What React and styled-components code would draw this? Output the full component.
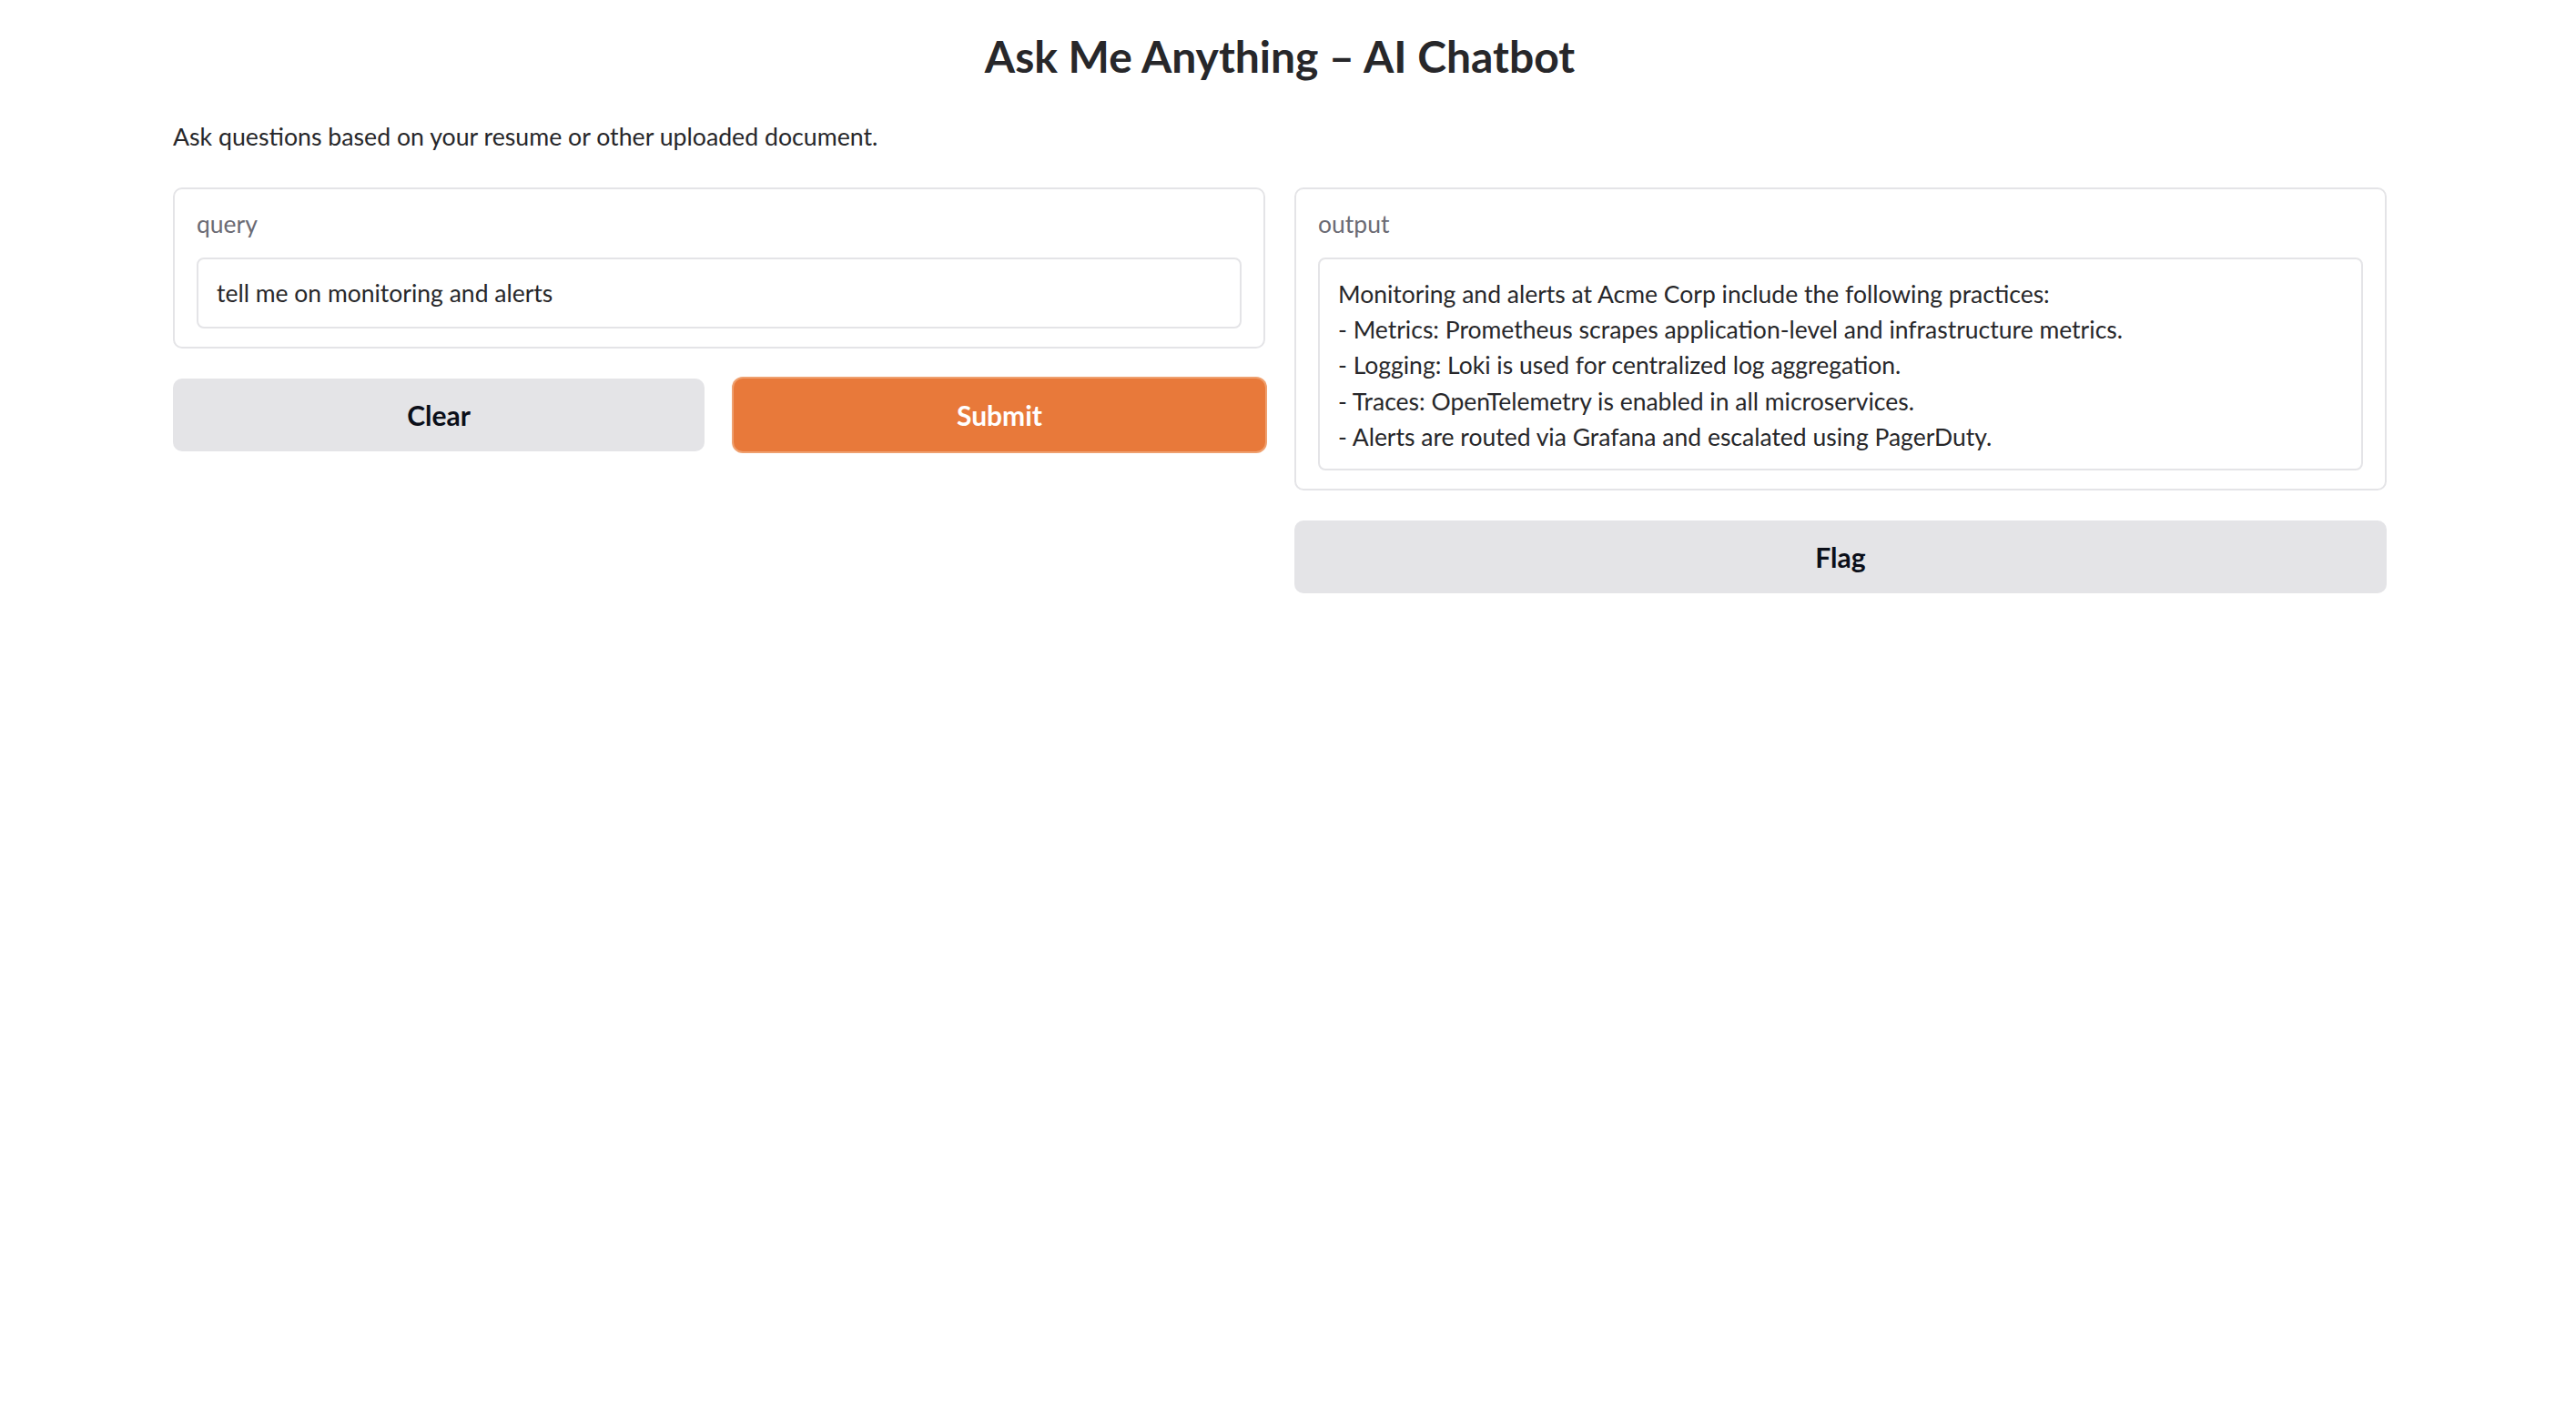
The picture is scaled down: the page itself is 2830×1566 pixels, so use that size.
import styled, { createGlobalStyle } from "styled-components";

const GlobalStyle = createGlobalStyle`
  html, body {
    margin: 0;
    padding: 0;
    background: #ffffff;
  }
  body {
    font-family: "Lato", "Liberation Sans", sans-serif;
    color: #27272a;
  }
`;

const StyledShell = styled.div`
  width: 2812px;
  padding-top: 31px;
`;

const StyledContainer = styled.main`
  width: 2432px;
  margin: 0 auto;
`;

const StyledTitle = styled.h1`
  margin: 0;
  text-align: center;
  font-size: 48px;
  line-height: 62px;
  font-weight: 700;
  color: #27272a;
`;

const StyledDescription = styled.p`
  margin: 36px 0 35px;
  font-size: 26.7px;
  line-height: 42px;
`;

const StyledColumns = styled.div`
  display: grid;
  grid-template-columns: 1fr 1fr;
  gap: 32px;
  align-items: start;
`;

const StyledColumn = styled.div`
  display: flex;
  flex-direction: column;
  gap: 33px;
`;

const StyledBlock = styled.div`
  border: 2px solid #e4e4e7;
  border-radius: 10px;
  padding: 20px 24px;
  background: #ffffff;
`;

const StyledLabel = styled.div`
  font-size: 26.5px;
  line-height: 37px;
  color: #6b6b74;
  margin-bottom: 18px;
`;

const StyledField = styled.div`
  border: 2px solid #e4e4e7;
  border-radius: 8px;
  padding: 17px 20px;
  font-size: 26.5px;
  line-height: 40px;
  color: #27272a;
  white-space: pre-wrap;
`;

const StyledOutput = styled(StyledField)`
  padding: 19px 20px 15px;
  line-height: 39.2px;
`;

const StyledButtonRow = styled.div`
  display: grid;
  grid-template-columns: 1fr 1fr;
  gap: 32px;
`;

const StyledButton = styled.button`
  height: 80px;
  border: none;
  border-radius: 10px;
  font-family: inherit;
  font-size: 30px;
  font-weight: 700;
  cursor: pointer;
  background: ${({ $primary }) => ($primary ? "#e8793a" : "#e4e4e7")};
  color: ${({ $primary }) => ($primary ? "#ffffff" : "#0b0f19")};
  box-shadow: ${({ $primary }) => ($primary ? "0 0 0 2px #efa06f" : "none")};
`;

const answer = [
  "Monitoring and alerts at Acme Corp include the following practices:",
  "- Metrics: Prometheus scrapes application-level and infrastructure metrics.",
  "- Logging: Loki is used for centralized log aggregation.",
  "- Traces: OpenTelemetry is enabled in all microservices.",
  "- Alerts are routed via Grafana and escalated using PagerDuty.",
];

export default function App() {
  return (
    <StyledShell>
      <GlobalStyle />
      <StyledContainer>
        <StyledTitle>Ask Me Anything – AI Chatbot</StyledTitle>
        <StyledDescription>
          Ask questions based on your resume or other uploaded document.
        </StyledDescription>
        <StyledColumns>
          <StyledColumn>
            <StyledBlock>
              <StyledLabel>query</StyledLabel>
              <StyledField>tell me on monitoring and alerts</StyledField>
            </StyledBlock>
            <StyledButtonRow>
              <StyledButton>Clear</StyledButton>
              <StyledButton $primary>Submit</StyledButton>
            </StyledButtonRow>
          </StyledColumn>
          <StyledColumn>
            <StyledBlock>
              <StyledLabel>output</StyledLabel>
              <StyledOutput>{answer.join("\n")}</StyledOutput>
            </StyledBlock>
            <StyledButton>Flag</StyledButton>
          </StyledColumn>
        </StyledColumns>
      </StyledContainer>
    </StyledShell>
  );
}
